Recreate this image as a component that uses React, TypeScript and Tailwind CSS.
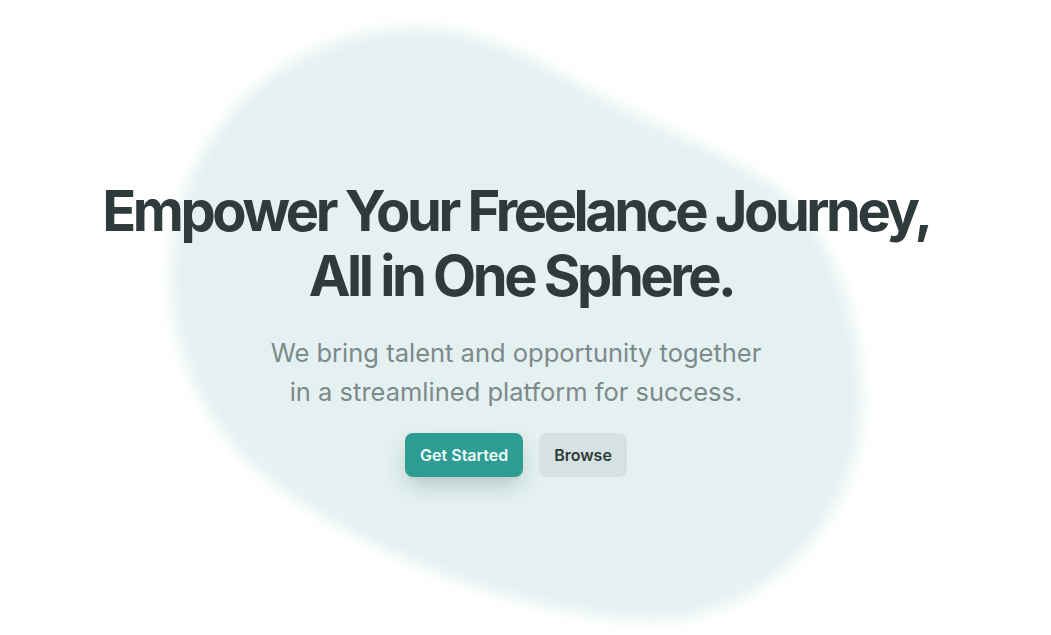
import { ReactNode } from 'react';

const Button = ({ children, primary }: { children: ReactNode; primary?: boolean }) => (
  <button
    className={
      primary
        ? 'h-11 px-[15px] rounded-lg bg-[#2d9c92] text-[#effaf8] text-base font-semibold shadow-[0_10px_22px_-4px_rgba(40,70,70,0.3)]'
        : 'h-11 px-[15px] rounded-lg bg-[#d6e1e1] text-[#2f3a3a] text-base font-semibold'
    }
  >
    {children}
  </button>
);

// soft background blob
const Blob = () => (
  <svg
    className="absolute left-0 top-0 blur-[7px]"
    width="1051"
    height="635"
    viewBox="0 0 1051 635"
  >
    <path
      fill="#e5f1f1"
      d="M410 28 C470 26 530 55 583 87 C650 125 720 150 775 187 C830 225 862 320 862 400 C864 520 760 622 650 620 C520 618 330 540 250 463 C180 395 160 300 175 230 C190 140 270 35 410 28 Z"
    />
  </svg>
);

const App = () => {
  return (
    <div className="relative w-full h-[635px] overflow-hidden bg-white font-['Inter',sans-serif]">
      <Blob />

      <section className="relative flex flex-col items-center pt-[179px] pr-[19px] text-center">
        <h1 className="text-[56px] leading-[65px] font-bold tracking-[-0.062em] text-[#2f3a3a]">
          Empower Your Freelance Journey,
          <br />
          <span className="ml-[10px]">All in One Sphere.</span>
        </h1>

        <p className="mt-6 text-[25.5px] leading-[39px] text-[#7c8a89]">
          We bring talent and opportunity together
          <br />
          in a streamlined platform for success.
        </p>

        <div className="mt-[22px] flex gap-4">
          <Button primary>Get Started</Button>
          <Button>Browse</Button>
        </div>
      </section>
    </div>
  );
};

export default App;
